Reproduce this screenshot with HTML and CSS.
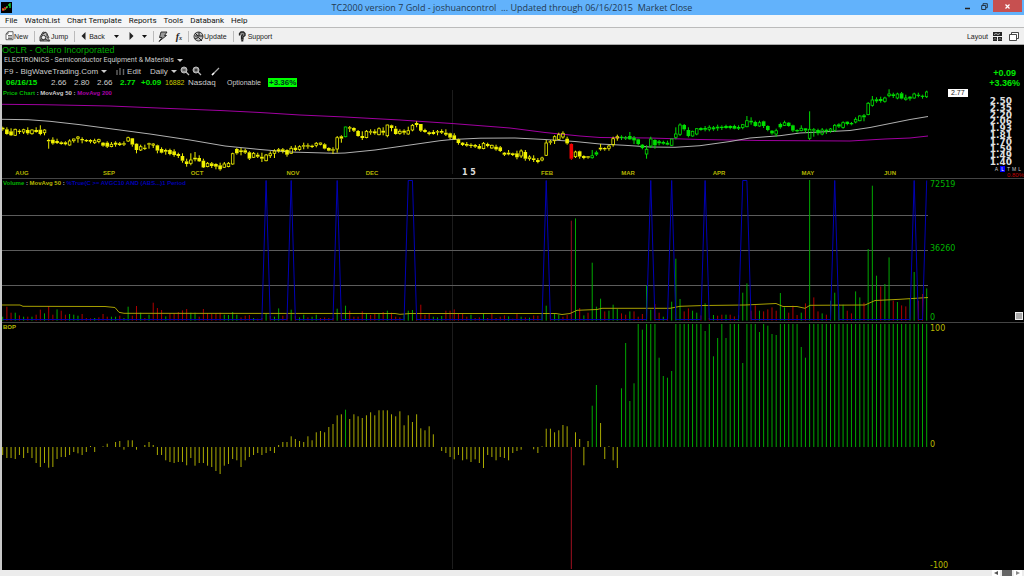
FILE: index.html
```html
<!DOCTYPE html>
<html lang="en">
<head>
<meta charset="utf-8">
<title>TC2000 version 7 Gold</title>
<link rel="stylesheet" href="styles.css">
</head>
<body>
<div class="app">
  <header class="titlebar">
    <svg class="app-icon" viewBox="0 0 11 11"><rect width="11" height="11" fill="#000"/><path d="M2 9V6M4 7V5" stroke="#d22" stroke-width="1.6"/><path d="M6 6V4M8 4V2M9 6V1" stroke="#1c3" stroke-width="1.4"/><path d="M1 7l3 1 2-3" stroke="#cc2" fill="none" stroke-width=".7"/></svg>
    <h1 class="title">TC2000 version 7 Gold - joshuancontrol &nbsp;... Updated through 06/16/2015 &nbsp;Market Close</h1>
    <div class="window-buttons">
      <button class="win" aria-label="Minimize"><svg width="7" height="7" viewBox="0 0 7 7"><path d="M1 5.500h5" stroke="#222" stroke-width="1.500"/></svg></button>
      <button class="win" aria-label="Restore"><svg width="7" height="7" viewBox="0 0 7 7"><path d="M.7 2.500h4v4h-4zM2 2V.7h4.300v4H5" stroke="#234" fill="none"/></svg></button>
      <button class="win close" aria-label="Close"><svg width="5" height="5" viewBox="0 0 5 5"><path d="M.5.5l4 4M4.500.5l-4 4" stroke="#fff" stroke-width="1.200"/></svg></button>
    </div>
  </header>

  <nav class="menu">
    <a href="#">File</a><a href="#">WatchList</a><a href="#">Chart Template</a><a href="#">Reports</a><a href="#">Tools</a><a href="#">Databank</a><a href="#">Help</a>
  </nav>

  <div class="toolbar">
    <button class="tool"><svg width="9" height="10" viewBox="0 0 9 10"><path d="M3 .7h5v8H1V3zM3 .7V3H1M3 4.500h4M3 6h4M3 7.500h4" fill="#fff" stroke="#444" stroke-width=".8"/></svg>New</button>
    <i class="sep"></i>
    <button class="tool"><svg width="12" height="11" viewBox="0 0 12 11"><path d="M1 10V6l3-5 4 1v4l3 4z" fill="#bbb" stroke="#333" stroke-width=".9"/><circle cx="4.500" cy="6.500" r="2.200" fill="#eee" stroke="#333"/><path d="M6 8l4 2M2 4l5-3M8 3l2 4M1 9h4" stroke="#333"/></svg>Jump</button>
    <i class="sep"></i>
    <button class="tool back"><svg width="5" height="8" viewBox="0 0 5 8"><path d="M4.500 0v8L.5 4z" fill="#222"/></svg>Back</button>
    <button class="tool drop" aria-label="Back history"><svg width="5" height="3" viewBox="0 0 5 3"><path d="M0 0h5L2.500 3z" fill="#111"/></svg></button>
    <button class="tool fwd" aria-label="Forward"><svg width="5" height="8" viewBox="0 0 5 8"><path d="M.5 0v8l4-4z" fill="#222"/></svg></button>
    <button class="tool" aria-label="Forward history"><svg width="5" height="3" viewBox="0 0 5 3"><path d="M0 0h5L2.500 3z" fill="#111"/></svg></button>
    <i class="sep"></i>
    <button class="tool" aria-label="Quick scan"><svg width="10" height="11" viewBox="0 0 10 11"><path d="M3 1h6L6.500 4.500h2L1 10.500 4 6.500H1.500z" fill="#999" stroke="#222" stroke-width=".9"/></svg></button>
    <button class="tool formula" aria-label="Formula"><em>f<small>x</small></em></button>
    <i class="sep"></i>
    <button class="tool"><svg width="11" height="11" viewBox="0 0 11 11"><circle cx="5.500" cy="5.500" r="4.500" fill="#bbb" stroke="#333"/><path d="M2 2l3 3h5M2 8l4-2M6 1v4M6 7l3 3M2 5h3" stroke="#222" fill="none"/></svg>Update</button>
    <i class="sep"></i>
    <button class="tool support"><svg width="8" height="11" viewBox="0 0 8 11"><path d="M1.500 4.500V2.500L3 1h2.500L7 2.500v2L5 6v2H3.500V5L5 3.500" fill="#888" stroke="#222" stroke-width="1.300"/><path d="M3.300 9.700h2" stroke="#222" stroke-width="1.600"/></svg>Support</button>
    <button class="tool layout">Layout<svg width="9" height="9" viewBox="0 0 9 9"><path d="M0 0h9v4H0zM0 5h4v4H0zM5 5h4v4H5z" fill="#222"/><path d="M1 2.500l2-1 2 1 2-1M1 7.500l1-1 1 1M6 7.500l1-1 1 1" stroke="#ddd" fill="none" stroke-width=".8"/></svg></button>
    <button class="tool" aria-label="Windows"><svg width="10" height="9" viewBox="0 0 10 9"><path d="M2.500 2V.5h7v6H8M.5 2.500h7v6h-7z" stroke="#333" fill="#fff" stroke-width=".9"/></svg></button>
  </div>

  <main class="workspace">
    <section class="quote">
      <div class="quote-main">
        <h2 class="symbol">OCLR - Oclaro Incorporated</h2>
        <button class="sector">ELECTRONICS - Semiconductor Equipment &amp; Materials<i class="caret"></i></button>
        <div class="row controls">
          <button>F9 - BigWaveTrading.Com<i class="caret"></i></button>
          <button class="edit"><svg width="9" height="7" viewBox="0 0 9 7"><path d="M1 2v5M4 0v7M7.500 1v6" stroke="#666" stroke-width="1.400"/></svg>Edit</button>
          <button class="daily">Daily<i class="caret"></i></button>
          <button class="zoom" aria-label="Zoom out"><svg width="10" height="10" viewBox="0 0 10 10"><circle cx="4" cy="4" r="3" fill="#999" stroke="#bbb"/><path d="M6 6l3 3" stroke="#bbb" stroke-width="1.300"/><path d="M2.500 4h3" stroke="#222"/></svg></button>
          <button aria-label="Zoom in"><svg width="10" height="10" viewBox="0 0 10 10"><circle cx="4" cy="4" r="3" fill="#999" stroke="#bbb"/><path d="M6 6l3 3" stroke="#bbb" stroke-width="1.300"/><path d="M2.500 4h3M4 2.500v3" stroke="#222"/></svg></button>
          <button class="draw" aria-label="Draw line"><svg width="9" height="9" viewBox="0 0 9 9"><path d="M1 8l7-7" stroke="#aaa" stroke-width="1.200"/><path d="M1 8l2-2" stroke="#fff" stroke-width="1.500"/></svg></button>
        </div>
        <div class="row prices">
          <b class="c-date">06/16/15</b><span class="c-price">2.66</span><span class="c-price">2.80</span><span class="c-price">2.66</span><b class="c-last">2.77</b><b class="c-chg">+0.09</b><span class="c-vol">16882</span><span class="c-exch">Nasdaq</span><span class="c-opt">Optionable</span><b class="badge">+3.36%</b>
        </div>
      </div>
      <div class="change"><b>+0.09</b><b>+3.36%</b></div>
    </section>

    <section class="panel price">
      <div class="plot" id="price">
        <p class="legend"><span class="green">Price Chart</span> : MovAvg 50 : <span class="magenta">MovAvg 200</span></p>
      </div>
      <div class="axis">
        <span class="tag">2.77</span>
        <div class="scale"><b>2.50</b><b>2.35</b><b>2.20</b><b>2.06</b><b>1.93</b><b>1.81</b><b>1.70</b><b>1.59</b><b>1.49</b><b>1.40</b></div>
        <div class="modes"><span>A</span><span class="on">L</span><span>T</span><span>M</span><span>L</span></div>
        <span class="pct">0.80%</span>
      </div>
    </section>

    <section class="panel volume">
      <div class="plot" id="volume">
        <p class="legend"><span class="green">Volume</span> : <span class="yellow">MovAvg 50</span> : <span class="blue">%True(C &gt;= AVGC10 AND (ABS...)1 Period</span></p>
      </div>
      <div class="axis marks green"><span>72519</span><span class="mid">36260</span><span>0</span><button class="grip" aria-label="Panel size"></button></div>
    </section>

    <section class="panel bop">
      <div class="plot" id="bop"><p class="legend"><span class="yellow">BOP</span></p></div>
      <div class="axis marks yellow"><span>100</span><span class="mid">0</span><span>-100</span></div>
    </section>
  </main>

  <footer class="scroll">
    <button class="arrow" aria-label="Scroll left"><svg width="4" height="4" viewBox="0 0 4 4"><path d="M4 0v4L0 2z" fill="#555"/></svg></button>
    <span class="thumb"></span>
    <button class="arrow" aria-label="Scroll right"><svg width="4" height="4" viewBox="0 0 4 4"><path d="M0 0v4l4-2z" fill="#888"/></svg></button>
  </footer>
</div>
<script src="chart.js"></script>
</body>
</html>
```
FILE: styles.css
```css
* { box-sizing: border-box; }
body {
  margin: 0;
  background: #000;
  font-family: "Liberation Sans", Arial, sans-serif;
  font-size: 8px;
}
button {
  display: flex;
  align-items: center;
  padding: 0;
  border: 0;
  background: none;
  color: inherit;
  font: inherit;
}
svg { display: block; }

.app { display: flex; flex-direction: column; height: 100vh; min-height: 400px; }

.titlebar {
  display: grid;
  grid-template-columns: 80px 1fr 80px;
  height: 15px;
  background: #62b2fb;
  color: #223a52;
}
.app-icon { width: 11px; height: 11px; margin: 2px 1px; }
.title {
  margin: 0;
  font: 400 9px/15px "Open Sans", sans-serif;
  text-align: center;
  white-space: nowrap;
}
.window-buttons { display: flex; justify-content: flex-end; align-items: flex-start; padding-right: 2px; }
.win { justify-content: center; width: 17px; height: 12px; }
.close { width: 29px; background: #c75050; }

.menu {
  display: flex;
  gap: 7px;
  height: 12px;
  padding-left: 5px;
  background: #f5f6f7;
  font: 8px/12px Roboto, sans-serif;
}
.menu a { color: #111; text-decoration: none; }

.toolbar {
  display: flex;
  align-items: center;
  height: 18px;
  padding: 0 5px;
  border-top: 1px solid #bbb;
  border-bottom: 1px solid #aaa;
  background: #f0f0f0;
  color: #222;
  font-size: 7px;
}
.sep { width: 1px; height: 11px; margin: 0 4px 0 6px; background: #bbb; }
.back { gap: 3px; margin-left: 2px; }
.drop { margin: 0 10px 0 9px; }
.fwd { margin-right: 8px; }
.formula { margin-left: 8px; font: bold 10px "Liberation Serif", serif; }
.formula small { font-size: 6px; }
.support { gap: 2px; }
.layout { gap: 5px; margin: 0 7px 0 auto; }

.workspace {
  display: flex;
  flex: 1;
  flex-direction: column;
  min-height: 0;
  border-left: 2px solid #c8c8c8;
  color: #ccc;
}
.quote { display: flex; justify-content: space-between; height: 43px; }
.symbol { margin: 0; font: 9px/10px "Liberation Sans", sans-serif; color: #00a800; }
.sector { height: 10px; padding-left: 2px; font: 7px Roboto, sans-serif; }
.caret {
  width: 0;
  margin-left: 3px;
  border: 3px solid transparent;
  border-top-color: #ccc;
  border-bottom: 0;
}
.row { display: flex; align-items: center; }
.controls { height: 12px; padding-left: 2px; }
.edit { gap: 2px; margin-left: 9px; }
.daily { margin-left: 9px; }
.zoom { margin: 0 2px 0 3px; }
.draw { margin-left: 9px; }
.prices { height: 11px; padding-left: 4px; }
.c-date { width: 45px; }
.c-price { width: 23px; }
.c-last { width: 21px; }
.c-chg { width: 24px; }
.c-vol { width: 23px; color: #c8c800; font-size: 7px; }
.c-exch { width: 39px; }
.c-opt { width: 41px; font-size: 7px; }
.c-date, .c-last, .c-chg, .change { color: #00e800; }
.badge { padding: 0 1px; background: #0f0; color: #032; line-height: 9px; }
.change {
  display: flex;
  flex-direction: column;
  align-items: center;
  justify-content: flex-end;
  padding-right: 4px;
  font-size: 9px;
  line-height: 10px;
}

.panel { display: grid; grid-template-columns: 1fr 96px; min-height: 0; }
.price { flex: 90 1 0; }
.volume { flex: 144 1 0; box-shadow: inset 0 1px #444; }
.bop { flex: 248 1 0; box-shadow: inset 0 1px #444; }
.plot { position: relative; min-height: 0; }
.plot svg { position: absolute; width: 100%; height: 100%; }
.legend { margin: 0; padding: 2px 0 0 1px; font-size: 6px; font-weight: bold; line-height: 7px; white-space: nowrap; }
.green { color: #00b400; }
.yellow { color: #b9b900; }
.magenta { color: #a800a8; }
.blue { color: #0000b4; }
.months { position: absolute; inset: auto 0 1px 0; height: 8px; }
.months span { position: absolute; transform: translateX(-50%); color: #b4b400; font-size: 6px; font-weight: bold; line-height: 8px; white-space: pre; }
.months .year { color: #ddd; font-family: "DejaVu Sans", sans-serif; font-size: 8px; }

.axis { min-height: 0; }
.price .axis { display: flex; flex-direction: column; }
.tag {
  align-self: flex-start;
  margin: 1px 0 1px 20px;
  padding: 0 3px;
  background: #fff;
  color: #222;
  font-size: 7px;
  line-height: 8px;
}
.scale {
  display: flex;
  flex: 1;
  flex-direction: column;
  min-height: 0;
  padding-right: 12px;
  color: #ddd;
  font: bold 9px/7px "DejaVu Sans", sans-serif;
  text-align: right;
}
.scale b { flex: 1; min-height: 0; }
.modes { display: flex; justify-content: flex-end; gap: 2px; padding-right: 3px; font-size: 5px; line-height: 6px; }
.modes .on { padding: 0 1px; background: #00f; color: #fff; }
.pct { color: #c00000; font-size: 6px; line-height: 6px; text-align: right; }
.marks {
  position: relative;
  display: flex;
  flex-direction: column;
  justify-content: space-between;
  padding: 2px 0 0 2px;
  font: 8px/9px "DejaVu Sans", sans-serif;
}
.mid { margin-bottom: 6px; }
.grip {
  position: absolute;
  right: 1px;
  bottom: 2px;
  width: 8px;
  height: 8px;
  border: 1px solid #eee;
  background: #aaa;
}

.scroll { display: flex; align-items: center; justify-content: flex-end; gap: 2px; height: 6px; padding-right: 2px; background: #ececec; }
.arrow { justify-content: center; width: 8px; height: 6px; background: #fff; }
.thumb { width: 10px; height: 6px; background: #666; }
```
FILE: chart.js
```js
// Bars share one time axis; values are in thirds of a plot unit.
const FIRST = 2.7, STEP = 4.181;
const xAt = i => +(FIRST + STEP * i).toFixed(2);
const nums = s => s.trim().split(/\s+/).map(Number);

// high, body top, body bottom, low, filled
const candles = `110 113 118 122 1/112 118 132 134 1/115 124 136 138 1/116 118 136 138 0/118 122 126 132 1/116 119 126 132 0/112 120 130 134 1/118 120 131 134 0/112 120 126 128 1/106 119 132 136 1/118 120 128 136 0/146 150 154 176 1/142 149 160 164 1/146 153 159 162 1/154 157 162 164 1/154 157 163 166 1/148 153 165 167 0/146 147 152 158 0/138 141 145 158 0/142 147 151 160 1/148 150 153 156 1/148 150 155 160 1/146 152 158 162 0/146 149 154 160 0/156 158 167 170 1/154 158 170 174 1/156 163 170 172 0/154 158 164 170 1/156 160 165 168 1/154 160 164 168 1/140 143 153 156 0/144 145 164 170 1/160 161 180 190 1/164 170 180 183 0/164 173 176 180 1/158 160 164 176 1/160 162 165 174 0/164 166 182 190 1/172 177 188 190 1/176 180 185 194 1/176 180 192 196 1/178 184 195 200 1/188 192 198 204 1/190 198 212 218 1/206 214 222 230 1/190 210 220 226 0/186 203 208 214 1/196 204 214 216 1/206 212 232 234 1/216 220 230 232 0/216 220 228 234 1/220 222 230 238 1/218 226 238 242 1/216 222 232 234 0/216 220 230 232 0/188 191 222 224 0/174 177 190 194 1/174 181 186 196 1/176 181 188 192 1/184 187 206 210 1/186 190 202 204 0/188 194 200 204 1/188 200 206 216 1/192 195 212 214 0/184 191 197 204 0/178 183 190 204 0/174 178 184 188 1/174 178 184 190 1/178 180 194 200 1/168 175 190 192 0/166 173 180 184 1/166 170 178 182 0/158 166 170 178 1/160 166 170 176 1/164 167 171 174 1/156 160 166 172 0/158 159 163 166 0/160 163 176 178 1/172 174 182 184 1/172 178 182 192 1/138 143 177 188 0/136 139 146 158 1/110 111 140 142 0/108 112 116 126 1/112 114 122 126 1/120 123 138 140 1/124 138 144 150 1/120 124 143 145 0/118 124 128 134 1/118 124 130 134 1/112 116 134 136 0/112 122 128 136 1/104 105 137 142 0/104 106 114 124 1/108 116 132 134 1/118 124 130 134 0/118 122 128 134 1/110 122 132 134 0/102 106 120 124 0/94 99 105 112 1/102 102 122 126 1/116 120 126 128 1/124 127 132 136 1/120 126 132 134 1/120 124 127 136 1/118 123 128 132 1/118 128 134 138 1/128 130 143 148 1/130 136 148 150 1/146 148 159 164 1/156 158 165 168 1/156 162 167 170 1/160 164 168 174 1/162 165 170 174 1/162 168 176 178 1/156 160 176 178 0/158 162 168 172 1/164 166 174 176 0/164 170 178 182 1/168 172 183 186 1/186 188 194 198 1/180 188 193 196 1/188 190 195 198 1/182 190 202 208 1/178 183 198 204 0/180 186 206 212 1/196 201 206 212 0/196 205 210 216 1/204 210 216 220 1/200 204 210 214 0/150 159 196 198 0/150 154 158 164 1/136 140 152 162 0/128 134 148 150 0/124 130 141 146 0/140 146 160 164 1/160 162 206 210 1/182 186 200 204 0/182 184 200 206 1/196 198 204 208 1/198 199 203 206 1/180 197 203 206 0/182 187 194 198 1/162 173 178 182 1/172 174 178 182 1/164 168 175 182 0/140 146 164 170 0/134 140 144 152 0/136 140 144 150 1/138 142 146 150 1/126 138 148 150 1/138 143 151 162 1/146 148 162 166 1/162 164 174 178 1/166 178 192 206 0/140 147 168 174 0/148 150 166 176 1/150 154 160 166 1/152 156 161 164 1/152 158 164 166 1/146 147 166 168 0/112 132 142 148 0/100 105 133 138 0/102 105 118 122 1/112 120 138 142 1/122 124 138 140 0/114 116 132 136 0/112 114 120 122 1/108 114 119 124 1/106 112 118 124 0/108 112 118 122 1/104 110 115 122 1/106 110 114 120 1/104 108 114 116 1/106 108 114 118 1/104 108 116 118 1/106 111 116 120 1/102 104 112 118 0/78 92 110 112 0/82 92 97 104 1/92 96 108 110 1/92 98 108 110 0/92 94 108 114 1/106 108 120 124 1/120 122 130 134 1/116 122 132 140 0/98 102 112 116 1/92 98 106 108 0/96 98 108 110 1/104 106 122 126 1/118 120 124 128 1/106 115 122 124 0/114 115 122 128 1/64 118 145 150 0/114 118 122 140 1/116 120 130 136 1/114 120 132 136 0/116 119 124 132 1/114 117 123 128 0/102 106 121 126 0/100 103 110 114 1/94 98 112 116 0/94 95 102 106 1/96 99 103 106 1/82 88 96 100 0/76 78 92 94 0/72 76 82 94 1/36 40 74 76 0/18 30 46 50 0/22 28 34 38 1/20 27 33 38 1/20 24 34 38 0/-2 12 17 22 0/8 13 18 24 1/8 12 24 28 0/6 10 26 28 1/14 24 28 32 0/18 20 26 32 1/8 12 24 26 0/8 14 17 22 1/14 17 20 26 1/2 6 20 24 0`.split("/").map(nums);

// Up days are positive, down days negative.
const volume = nums(`12 -42 -24 24 -16 12 -12 12 -18 -33 22 -44 -18 34 -30 -18 20 18 15 -20 -8 -7 8 -10 -20 -12 12 12 -15 8 42 -15 -44 24 -8 18 -54 -38 -32 13 -22 -23 -26 -31 -35 24 24 -12 -35 -23 -20 -23 -24 18 17 26 18 -10 -15 -17 8 -6 -8 20 -14 12 37 -15 -22 33 -14 10 18 -10 12 18 -8 -10 -8 -8
36 -20 45 -30 -12 -12 -28 22 -17 -20 21 -26 30 -24 -12 -10 20 30 32 -25 -48 -18 -22 12 10 14 -30 -30 -34 -20 -23 -12 18 -8 -10 22 -8 -20 -8 -12 -16 13 -6 -20 12 -10 9 -16 -15 24 45 -20 20 18 -12 -17 -300 307 -38 16 -24 174 42 66 -28 30 48 35 -22 -18 28 -28 -12 -20 106 33 -50 -24 12 -12
57 186 65 -28 -37 30 24 -16 52 -8 17 -15 -18 18 -18 -13 16 84 112 -30 -46 30 -28 -34 -40 -30 83 40 -24 -45 -17 24 -52 422 -70 -28 22 -18 60 84 50 48 -30 -22 88 70 -54 215 405 135 -103 110 190 -60 56 -46 -43 65 146 -60 -80 97`);

const bop = nums(`-24 -33 -33 -36 -24 -33 -18 -33 -48 -60 -48 -62 -60 -36 -30 -30 -24 -15 -19 -24 -15 3 -15 0 2 10 0 15 18 -8 20 20 -8 0 6 15 6 -24 -24 -40 -45 -48 -45 -45 -55 -33 -56 -48 -48 -56 -60 -72 -81 -56 -51 -36 -40 -60 -40 -30 -24 -18 -24 -18 -12 -18 6 15 15 32 24 18 15 32 20 44 48 44 60 69
95 98 112 84 98 92 87 95 104 95 110 110 110 98 92 107 65 95 75 98 56 50 62 38 0 -12 -18 -30 -37 -24 -40 -37 -45 -37 -48 -63 -24 -30 -40 -30 -33 -40 -18 -12 -8 0 0 -7 -18 2 55 55 44 50 66 62 -366 44 24 -55 18 124 186 72 -36 2 -40 -63
176 312 138 191 369 352 369 369 369 268 213 208 228 369 369 369 369 369 369 369 348 369 272 327 369 327 369 369 369 252 369 369 369 345 369 364 339 336 369 369 369 369 369 300 268`);
while (bop.length < candles.length) bop.push(369);

const candleColor = i => i === 136 ? "#f00000" : (i === 82 || i === 141 || i === 142 || i > 147) ? "#00e000" : "#f0f000";
const bopColor = i => i === 136 ? "#a01020" : (i === 82 || i === 141 || i === 142 || i > 147) ? "#00a800" : "#aaaa00";

const vline = (x, a, b, color) => `<path d="M${x} ${a}V${b}" stroke="${color}"/>`;
const curve = (points, color) => `<polyline points="${points}" fill="none" stroke="${color}"/>`;
const yearLine = (a, b) => vline(452.5, a, b, "#1c1c1c");

function draw(id, top, height, body) {
  document.getElementById(id).insertAdjacentHTML("afterbegin",
    `<svg viewBox="2 ${top} 926 ${height}" preserveAspectRatio="none" aria-hidden="true">${body}</svg>`);
}

// Price
const level = v => +(90 + v / 3).toFixed(1);
let price = yearLine(90, 174);
price += curve("2,104.3 43,104.7 110,106 170,108.5 220,110.5 260,112.5 300,115 345,117 400,120 452,123.5 510,128 545,132.5 580,136 600,137.5 650,138 700,139.5 760,140.5 850,141 885,139 910,138 928,136", "#a000a0");
price += curve("2,119.3 28,119.7 50,121.3 80,124.7 110,128.7 150,134 190,140 225,146 260,149.5 290,152 335,153.3 345,153 375,150 410,145 440,140.7 452,139.5 480,138.2 515,138 545,139.5 575,141.5 600,144 625,145.3 650,147 675,147.3 700,145.7 730,141.5 750,138 780,135.7 800,133 850,130.5 870,127.5 890,123.5 910,119.5 928,116.5", "#b0b0b0");
candles.forEach(([hi, top, bottom, lo, filled], i) => {
  const x = xAt(i), color = candleColor(i), tall = Math.max(1.2, (bottom - top) / 3).toFixed(1);
  price += vline(x, level(hi), level(top), color) + vline(x, level(bottom), level(lo), color);
  price += filled
    ? `<rect x="${(x - 1.8).toFixed(2)}" y="${level(top)}" width="3.6" height="${tall}" fill="${color}"/>`
    : `<rect x="${(x - 1.3).toFixed(2)}" y="${level(top)}" width="2.6" height="${tall}" fill="none" stroke="${color}" stroke-width=".8"/>`;
});
draw("price", 88, 90, price);

// Volume with condition spikes
let vol = yearLine(179, 321);
for (const y of [215.5, 250.5, 285.5]) vol += `<path d="M2 ${y}H928" stroke="#5c5c5c"/>`;
volume.forEach((v, i) => vol += vline(xAt(i), 320.7, +(320.7 - Math.abs(v) / 3).toFixed(1), v < 0 ? (i === 136 ? "#901020" : "#b00000") : "#00a800"));
vol += curve("2,305 20,305 23,306.3 105,306.5 115,307.5 119,312.3 124,313.3 395,313.5 400,314.3 410,313.5 556,313.5 562,314.5 570,313.5 577,310.3 597,309.5 602,308.3 670,308.3 680,306.3 704,305.5 745,305 776,303.5 783,306.5 797,306.5 805,308.3 810,305.3 865,305 875,300.5 900,299.3 928,297.5", "#a8a000");
const hits = new Set([63, 69, 80, 97, 98, 130, 155, 160, 168, 177, 178, 199, 218, 221]);
vol += curve(candles.map((_, i) => `${xAt(i)},${hits.has(i) ? 180.5 : 319.5}`).join(" "), "#0000b4");
draw("volume", 178, 144, vol);

// Balance of power
let power = yearLine(323, 569);
bop.forEach((v, i) => { if (v) power += vline(xAt(i), 447, +(447 - v / 3).toFixed(1), bopColor(i)); });
draw("bop", 322, 248, power);

// Time labels
const months = [["AUG", 22], ["SEP", 109], ["OCT", 197], ["NOV", 293], ["DEC", 372], ["1 5", 469], ["FEB", 547], ["MAR", 628], ["APR", 719], ["MAY", 808], ["JUN", 890]];
document.getElementById("price").insertAdjacentHTML("beforeend",
  `<div class="months">${months.map(([name, x]) => `<span${name === "1 5" ? ' class="year"' : ""} style="left:${((x - 2) / 9.26).toFixed(2)}%">${name}</span>`).join("")}</div>`);
```
